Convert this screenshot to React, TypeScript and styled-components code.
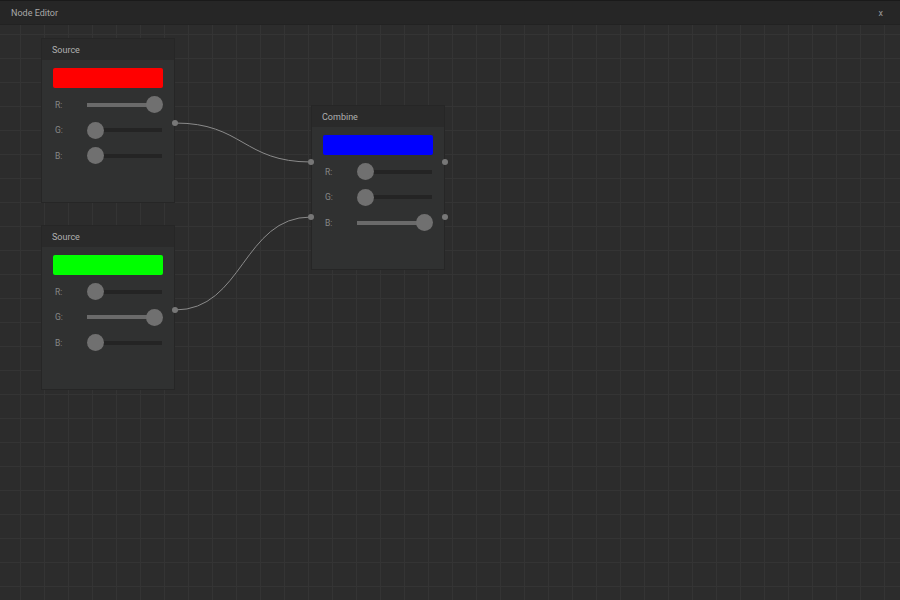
import React from "react";
import styled, { createGlobalStyle } from "styled-components";

const Global = createGlobalStyle`
  html, body { margin: 0; padding: 0; background: #2b2b2b; }
  body { font-family: Roboto, "Liberation Sans", sans-serif; }
`;

const Frame = styled.div`
  width: 900px; height: 600px; display: flex; flex-direction: column; overflow: hidden;
  background: #2b2b2b;
`;
const TitleBar = styled.div`
  height: 23px; flex: none; display: flex; align-items: center; justify-content: space-between;
  padding: 0 17px 0 11px; background: #262626; color: #a8a8a8; font-size: 9px;
  border-top: 1px solid #1a1a1a; border-bottom: 1px solid #222;
`;
const Close = styled.span` font-size: 9px; color: #999; `;
const Canvas = styled.div`
  position: relative; flex: 1;
  background-color: #2c2c2c;
  background-image:
    linear-gradient(to right, #343434 1px, transparent 1px),
    linear-gradient(to bottom, #343434 1px, transparent 1px);
  background-size: 24px 24px;
  background-position: 20px 9px;
`;
const Node = styled.div<{ x: number; y: number; h: number }>`
  position: absolute; left: ${p => p.x}px; top: ${p => p.y}px; width: 134px; height: ${p => p.h}px;
  background: #303131; border: 1px solid #262626; box-sizing: border-box;
  display: flex; flex-direction: column;
`;
const Header = styled.div`
  height: 21px; background: #2a2a2a; color: #b0b0b0; font-size: 9px;
  display: flex; align-items: center; padding-left: 10px; flex: none;
`;
const Body = styled.div`
  padding: 8px 11px 0 11px; display: flex; flex-direction: column;
`;
const Swatch = styled.div<{ c: string }>`
  height: 20px; border-radius: 2px; background: ${p => p.c}; margin-bottom: 4px;
`;
const Row = styled.div`
  height: 25.5px; display: flex; align-items: center; color: #888; font-size: 8.5px;
`;
const Label = styled.span` width: 32px; padding-left: 2px; `;
const Track = styled.div`
  position: relative; width: 75px; height: 4px; background: #242424;
`;
const Fill = styled.div` position: absolute; left: 0; top: 0; bottom: 0; background: #6a6a6a; `;
const Knob = styled.div`
  position: absolute; top: 50%; width: 17px; height: 17px; margin: -8.5px 0 0 -8.5px;
  border-radius: 50%; background: #707070;
`;
const Port = styled.div<{ x: number; y: number }>`
  position: absolute; left: ${p => p.x - 3}px; top: ${p => p.y - 3}px;
  width: 6px; height: 6px; border-radius: 50%; background: #777;
`;
const Wires = styled.svg` position: absolute; left: 0; top: 0; `;

const Slider = ({ label, v }: { label: string; v: number }) => (
  <Row>
    <Label>{label}</Label>
    <Track>
      <Fill style={{ width: `${v * 100}%` }} />
      <Knob style={{ left: `${8 + v * 59}px` }} />
    </Track>
  </Row>
);

const ColorNode = ({ x, y, title, c, vals }: { x: number; y: number; title: string; c: string; vals: number[] }) => (
  <Node x={x} y={y} h={165}>
    <Header>{title}</Header>
    <Body>
      <Swatch c={c} />
      <Slider label="R:" v={vals[0]} />
      <Slider label="G:" v={vals[1]} />
      <Slider label="B:" v={vals[2]} />
    </Body>
  </Node>
);

const OY = 24;
export default function App() {
  return (
    <>
      <Global />
      <Frame>
        <TitleBar><span>Node Editor</span><Close>x</Close></TitleBar>
        <Canvas>
          <ColorNode x={41} y={37 - OY} title="Source" c="#ff0000" vals={[1, 0, 0]} />
          <ColorNode x={41} y={224 - OY} title="Source" c="#00ff00" vals={[0, 1, 0]} />
          <ColorNode x={311} y={104 - OY} title="Combine" c="#0000ff" vals={[0, 0, 1]} />
          <Wires width="900" height="576">
            <path d={`M175 ${122 - OY} C 243 ${122 - OY}, 243 ${161 - OY}, 311 ${161 - OY}`} stroke="#8a8a8a" strokeWidth="1" fill="none" />
            <path d={`M175 ${309 - OY} C 243 ${309 - OY}, 243 ${216 - OY}, 311 ${216 - OY}`} stroke="#8a8a8a" strokeWidth="1" fill="none" />
          </Wires>
          <Port x={175} y={122 - OY} />
          <Port x={175} y={309 - OY} />
          <Port x={311} y={161 - OY} />
          <Port x={311} y={216 - OY} />
          <Port x={445} y={161 - OY} />
          <Port x={445} y={216 - OY} />
        </Canvas>
      </Frame>
    </>
  );
}
